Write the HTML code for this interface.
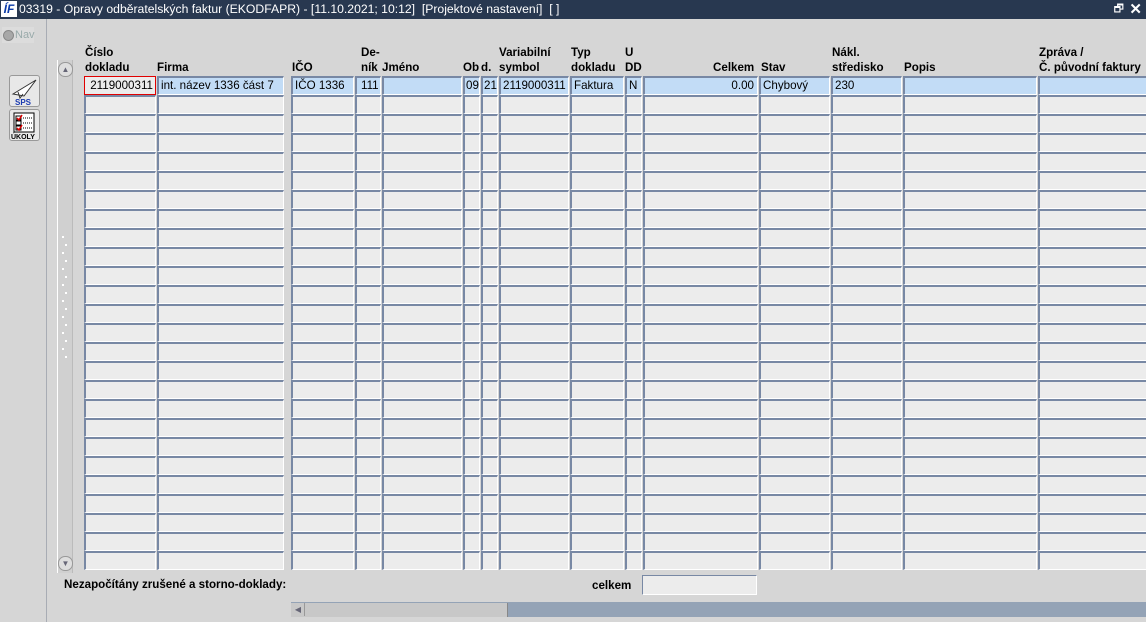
<!DOCTYPE html>
<html><head><meta charset="utf-8">
<style>
*{margin:0;padding:0;box-sizing:border-box}
body{width:1146px;height:622px;overflow:hidden;background:#d6d6d6;font-family:"Liberation Sans",Arial,sans-serif;font-size:11.6px;color:#000;position:relative}
#title{position:absolute;left:0;top:0;width:1146px;height:19px;background:#283850;color:#fff;font-size:12.2px;line-height:19px}
#title .t{position:absolute;left:19px;top:0}
#logo{position:absolute;left:1px;top:1px;width:16px;height:16px;background:#fff;color:#0a3aa8;font-weight:bold;font-style:italic;font-size:12px;line-height:16px;text-align:center}
#left{position:absolute;left:0;top:19px;width:47px;height:603px;background:#d6d6d6;border-right:1px solid #a8acb4}
.nav{position:absolute;left:2px;top:8px;width:32px;height:16px;background:#dcdcdc;color:#9aa;font-size:11px;line-height:16px;padding-left:13px}
.nav:before{content:"";position:absolute;left:1px;top:3px;width:9px;height:9px;border-radius:50%;background:#a8a8a8;border:1px solid #888}
.btn{position:absolute;left:9px;width:31px;height:32px;background:#e8e8e8;border:1px solid #999;border-radius:3px}
#vs{position:absolute;left:57px;top:60px;width:16px;height:513px;background:#d0d0d0;border-left:1px solid #fff;border-right:1px solid #bbb}
.arr{position:absolute;left:0;width:15px;height:15px;background:#dedede;border:1px solid #999;border-radius:7px;font-size:8px;color:#667;text-align:center;line-height:13px}
.h{position:absolute;font-weight:bold;font-size:11.6px;line-height:15px}
.c{position:absolute;height:19px;background:#ececec;border-top:2px solid #7888a4;border-left:2px solid #7888a4;border-bottom:1px solid #fff;border-right:1px solid #fff;font-size:11.6px;line-height:16px;padding-left:2px;white-space:nowrap;overflow:hidden}
.a{background:#c2dcf6}
#hs{position:absolute;left:291px;top:602px;width:855px;height:15px;background:#94a3b6}
#thumb{position:absolute;left:0;top:1px;width:217px;height:14px;background:#c8c8c8;border-right:1px solid #888}
</style></head><body>
<div id="title"><div id="logo">ÍF</div><span class="t">03319 - Opravy odběratelských faktur (EKODFAPR) - [11.10.2021; 10:12] &nbsp;[Projektové nastavení] &nbsp;[ ]</span>
<span style="position:absolute;right:22px;top:0;font-size:11px">🗗</span><span style="position:absolute;right:4px;top:0;font-size:15px;font-weight:bold">✕</span></div>
<div id="left">
<div class="nav">Nav</div>
<div class="btn" style="top:56px"><svg width="29" height="30"><path d="M3 18 L26 4 L14 20 Z" fill="#fff" stroke="#333"/><path d="M8 16 L10 22 L13 18" fill="none" stroke="#333"/><text x="5" y="29" font-size="8" font-weight="bold" fill="#1a3ab0" font-family="Liberation Sans">SPS</text></svg></div>
<div class="btn" style="top:90px"><svg width="29" height="30"><rect x="4" y="3" width="20" height="19" fill="#fff" stroke="#000"/><path d="M6 6h5v4h-5zM6 11h5v4h-5zM6 16h5v4h-5z" fill="none" stroke="#000"/><path d="M7 8l2 2 3-5M7 18l2 2 3-5" stroke="#d00" fill="none" stroke-width="1.5"/><path d="M13 8h9M13 13h9M13 18h9" stroke="#000" stroke-dasharray="1 1"/><text x="1" y="29" font-size="7" font-weight="bold" font-family="Liberation Sans">ÚKOLY</text></svg></div>
</div>
<div id="vs"><div class="arr" style="top:2px">▲</div><div class="arr" style="top:496px">▼</div>
<svg style="position:absolute;left:3px;top:176px" width="10" height="130"><g fill="#fff"></g></svg></div>

<div class="h" style="left:85px;top:45px">Číslo<br>dokladu</div>
<div class="h" style="left:157px;top:60px">Firma</div>
<div class="h" style="left:292px;top:60px">IČO</div>
<div class="h" style="left:361px;top:45px">De-<br>ník</div>
<div class="h" style="left:382px;top:60px">Jméno</div>
<div class="h" style="left:463px;top:60px">Ob</div>
<div class="h" style="left:481px;top:60px">d.</div>
<div class="h" style="left:499px;top:45px">Variabilní<br>symbol</div>
<div class="h" style="left:571px;top:45px">Typ<br>dokladu</div>
<div class="h" style="left:625px;top:45px">U<br>DD</div>
<div class="h" style="left:713px;top:60px">Celkem</div>
<div class="h" style="left:761px;top:60px">Stav</div>
<div class="h" style="left:832px;top:45px">Nákl.<br>středisko</div>
<div class="h" style="left:904px;top:60px">Popis</div>
<div class="h" style="left:1039px;top:45px">Zpráva /<br>Č. původní faktury</div>

<div id="grid"></div>
<div class="c a" style="left:84px;top:76px;width:72px;background:#ececec;border:1px solid #e00000;text-align:right;padding-right:2px;line-height:18px">2119000311</div>
<div class="c a" style="left:157px;top:76px;width:127px">int. název 1336 část 7</div>
<div class="c a" style="left:291px;top:76px;width:63px">IČO 1336</div>
<div class="c a" style="left:355px;top:76px;width:26px;padding-left:4px">111</div>
<div class="c a" style="left:382px;top:76px;width:80px"></div>
<div class="c a" style="left:463px;top:76px;width:17px;padding-left:1px">09</div>
<div class="c a" style="left:481px;top:76px;width:17px;padding-left:1px">21</div>
<div class="c a" style="left:499px;top:76px;width:70px">2119000311</div>
<div class="c a" style="left:570px;top:76px;width:54px">Faktura</div>
<div class="c a" style="left:625px;top:76px;width:17px">N</div>
<div class="c a" style="left:643px;top:76px;width:115px;text-align:right;padding-right:3px">0.00</div>
<div class="c a" style="left:759px;top:76px;width:71px">Chybový</div>
<div class="c a" style="left:831px;top:76px;width:71px">230</div>
<div class="c a" style="left:903px;top:76px;width:134px"></div>
<div class="c a" style="left:1038px;top:76px;width:110px"></div>

<div class="h" style="left:64px;top:577px">Nezapočítány zrušené a storno-doklady:</div>
<div class="h" style="left:592px;top:578px">celkem</div>
<div class="c" style="left:642px;top:575px;width:115px;height:20px;border-top:1px solid #7888a4;border-left:1px solid #7888a4"></div>
<div id="hs"><div id="thumb"><span style="position:absolute;left:1px;top:0;width:13px;height:13px;border-right:1px solid #999;font-size:8px;color:#667;line-height:13px;text-align:center">◀</span></div></div>
<script>
var cols=[[84,72],[157,127],[291,63],[355,26],[382,80],[463,17],[481,17],[499,70],[570,54],[625,17],[643,115],[759,71],[831,71],[903,134],[1038,110]];
var h='';
for(var r=1;r<26;r++){var y=76+r*19;for(var i=0;i<cols.length;i++){h+='<div class="c" style="left:'+cols[i][0]+'px;top:'+y+'px;width:'+cols[i][1]+'px"></div>';}}
document.getElementById('grid').innerHTML=h;
var s='';for(var k=0;k<16;k++){s+='<rect x="'+(k%2?4:1)+'" y="'+(k*8)+'" width="2" height="2" fill="#fff"/>';}
document.querySelector('#vs svg g').innerHTML=s;
</script>
</body></html>
